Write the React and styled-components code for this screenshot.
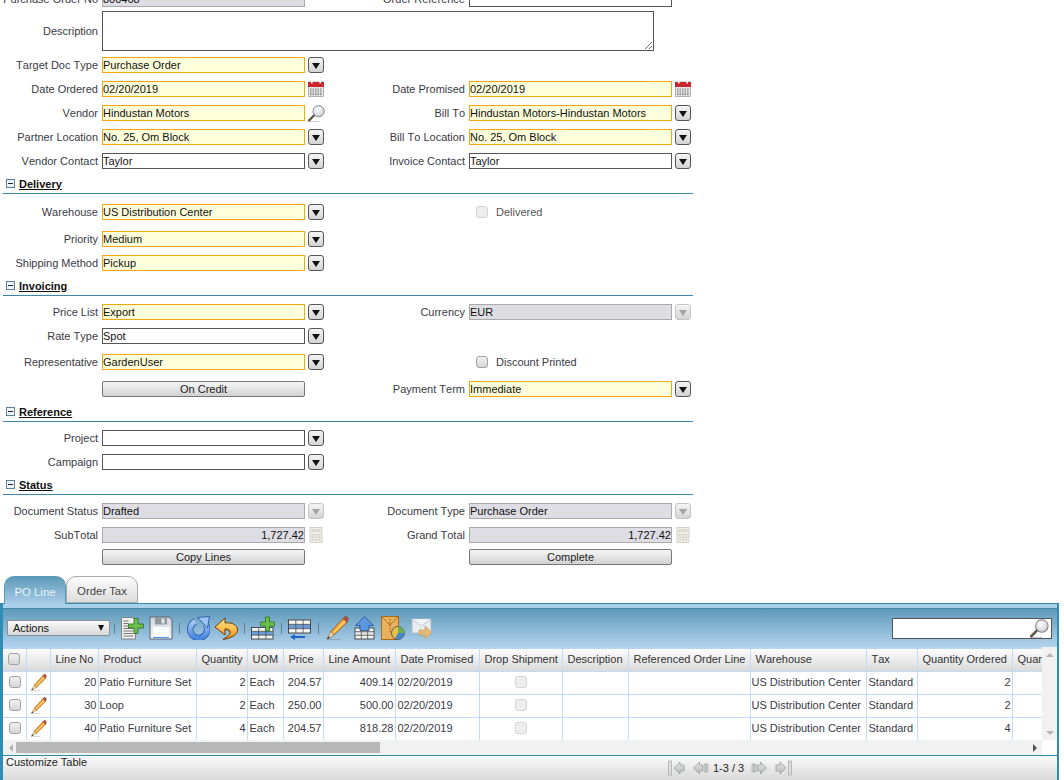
import styled, { createGlobalStyle } from 'styled-components';

const GlobalStyle = createGlobalStyle`
  html, body {
    margin: 0;
    padding: 0;
    height: 780px;
    overflow: hidden;
    background: #fff;
  }
  body {
    font-family: "Liberation Sans", Arial, sans-serif;
    font-size: 11px;
    color: #333;
  }
`;

const Page = styled.div`
  width: 1059px;
  margin-top: -13px;
`;

const Form = styled.div`
  width: 693px;
`;

const Row = styled.div`
  display: grid;
  grid-template-columns: 102px 203px 20px 144px 203px 21px;
  align-items: center;
  height: ${p => p.$h || 24}px;
  margin-top: ${p => p.$top || 0}px;
  margin-bottom: ${p => p.$bottom || 0}px;
`;

const Label = styled.label`
  padding-right: 4px;
  text-align: right;
  white-space: nowrap;
  font-kerning: none;
  color: #3a3a44;
`;

const kinds = {
  plain: 'background: #fff; border-color: #555;',
  mandatory: 'background: #ffffdc; border-color: #f0a90f;',
  disabled: 'background: #dedde3; border-color: #aaa;',
};

const TextInput = styled.input`
  box-sizing: border-box;
  width: 203px;
  height: 16px;
  padding: 0;
  border: 1px solid;
  outline: none;
  font: 11px "Liberation Sans", Arial, sans-serif;
  color: #111;
  text-align: ${p => (p.$right ? 'right' : 'left')};
  ${p => kinds[p.$kind || 'plain']}
`;

const DescArea = styled.textarea`
  box-sizing: border-box;
  grid-column: 2 / 6;
  width: 552px;
  height: 40px;
  margin: 0;
  padding: 0;
  border: 1px solid #555;
  outline: none;
`;

const IconCell = styled.div`
  display: flex;
  align-items: center;
  padding-left: 3px;
`;

const DropBtn = styled.span`
  box-sizing: border-box;
  display: flex;
  align-items: center;
  justify-content: center;
  width: 16px;
  height: 16px;
  border: 1px solid ${p => (p.$off ? '#c4c4c4' : '#555')};
  border-radius: 3px;
  background: linear-gradient(#f4f4f4, #d4d4d4);

  &::after {
    content: '';
    width: 0;
    height: 0;
    margin-top: 1px;
    border-left: 4px solid transparent;
    border-right: 4px solid transparent;
    border-top: 6px solid ${p => (p.$off ? '#a4a4a4' : '#111')};
  }
`;

const FormButton = styled.button`
  box-sizing: border-box;
  width: 203px;
  height: 16px;
  padding: 0;
  border: 1px solid #777;
  border-radius: 2px;
  background: linear-gradient(#f6f6f6, #d2d2d2);
  font: 11px "Liberation Sans", Arial, sans-serif;
  color: #222;
`;

const SectionHead = styled.div`
  display: flex;
  align-items: center;
  gap: 4px;
  box-sizing: border-box;
  height: 21px;
  margin-left: 3px;
  padding: 1px 0 0 3px;
  border-bottom: 1px solid #3f87aa;
`;

const MinusBox = styled.span`
  box-sizing: border-box;
  display: flex;
  align-items: center;
  justify-content: center;
  width: 9px;
  height: 9px;
  border: 1px solid #5d7f99;
  background: #eef3f7;

  &::after {
    content: '';
    width: 5px;
    height: 1px;
    background: #223;
  }
`;

const SectionTitle = styled.a`
  font-weight: bold;
  color: #111;
  text-decoration: underline;
`;

const CheckField = styled.div`
  display: flex;
  align-items: center;
  gap: 8px;
  padding-left: 7px;
  white-space: nowrap;
  color: ${p => (p.$off ? '#555' : '#3a3a44')};
`;

const Check = styled.input.attrs({ type: 'checkbox' })`
  appearance: none;
  box-sizing: border-box;
  display: block;
  width: 12px;
  height: 12px;
  margin: 0;
  border: 1px solid ${p => (p.disabled ? '#d4d4d4' : '#a2a2a2')};
  border-radius: 3px;
  background: ${p => (p.disabled ? '#eee' : 'linear-gradient(#f0f0f0, #d6d6d6)')};
`;

const Tabs = styled.div`
  display: flex;
  align-items: flex-end;
  height: 27px;
  margin-top: 9px;
  padding-left: 4px;
`;

const Tab = styled.div`
  box-sizing: border-box;
  display: flex;
  align-items: center;
  justify-content: center;
  width: ${p => p.$w}px;
  height: ${p => (p.$active ? 28 : 27)}px;
  padding-top: 2px;
  border-radius: 10px 10px 0 0;
  font-size: 11.4px;
  ${p => (p.$active
    ? 'background: linear-gradient(#5d9ab9, #a9cde8); color: #e9f3f8; border: 1px solid #5d9ab9; border-bottom: 0; margin-bottom: -1px; position: relative; z-index: 1;'
    : 'background: linear-gradient(#fdfdfd, #dcdcdc); color: #444; border: 1px solid #aaa;')}
`;

const Panel = styled.div`
  box-sizing: border-box;
  height: 177px;
  border: 2px solid #2f8cb2;
  border-width: 1px 2px 0 3px;
  display: flex;
  flex-direction: column;
`;

const TopStrip = styled.div`
  height: 4px;
  background: #a9cfe9;
  border-bottom: 1px solid #3f8bad;
`;

const Toolbar = styled.div`
  display: flex;
  align-items: center;
  box-sizing: border-box;
  height: 40px;
  padding: 0 0 2px 4px;
  background: linear-gradient(#5e9ab9, #b6d5f0);
`;

const ActionSelect = styled.div`
  box-sizing: border-box;
  display: flex;
  align-items: center;
  justify-content: space-between;
  width: 103px;
  height: 16px;
  margin-right: 4px;
  padding: 0 5px;
  border: 1px solid #8a8f94;
  border-radius: 2px;
  background: linear-gradient(#fafafa, #d8d8d8);
  color: #111;

  &::after {
    content: '';
    width: 0;
    height: 0;
    border-left: 3.5px solid transparent;
    border-right: 3.5px solid transparent;
    border-top: 6px solid #111;
  }
`;

const Sep = styled.span`
  width: 1px;
  height: 11px;
  margin-right: 6px;
  background: #66808f;
`;

const ToolIcon = styled.svg`
  display: block;
  width: 24px;
  height: 24px;
  flex: none;
  margin-right: ${p => p.$gap ?? 4}px;
`;

const PencilSlot = styled.span`
  flex: none;
  margin-right: 5px;
`;

const Search = styled.div`
  box-sizing: border-box;
  display: flex;
  align-items: center;
  justify-content: flex-end;
  width: 160px;
  height: 21px;
  margin-left: auto;
  margin-right: 5px;
  padding-right: 2px;
  border: 1px solid #555;
  background: #fff;
`;

const GridWrap = styled.div`
  display: flex;
  height: 91px;
`;

const TableClip = styled.div`
  width: 1039px;
  overflow: hidden;
`;

const Table = styled.table`
  table-layout: fixed;
  width: 1109px;
  border-collapse: collapse;
  font-size: 11px;
`;

const Th = styled.th`
  box-sizing: border-box;
  height: 22px;
  padding: 0 0 2px 5px;
  border-right: 1px solid #c2dbf6;
  border-bottom: 1px solid #c2dbf6;
  background: linear-gradient(#fdfdfd, #d9d9d9);
  font-weight: normal;
  font-kerning: none;
  text-align: left;
  white-space: nowrap;
  overflow: hidden;
  color: #333;
`;

const Td = styled.td`
  box-sizing: border-box;
  height: 23px;
  padding: 0 1px 1px ${p => p.$pad ?? 2}px;
  border-right: 1px solid #c2dbf6;
  border-bottom: 1px solid #c2dbf6;
  background: #fff;
  text-align: ${p => p.$align || 'left'};
  white-space: nowrap;
  overflow: hidden;
  color: #3a3a44;
`;

const Centered = styled.div`
  display: flex;
  justify-content: center;
`;

const VScroll = styled.div`
  width: 15px;
  margin-top: -2px;
  display: flex;
  flex-direction: column;
  justify-content: space-between;
  align-items: center;
  padding: 6px 0 5px;
  box-sizing: border-box;
  height: 93px;
  background: #f1f1f1;
`;

const Arrow = styled.span`
  width: 0;
  height: 0;
  ${p => ({
    up: 'border-left: 4px solid transparent; border-right: 4px solid transparent; border-bottom: 4px solid #b4b4b4;',
    down: 'border-left: 4px solid transparent; border-right: 4px solid transparent; border-top: 4px solid #b4b4b4;',
    left: 'border-top: 4px solid transparent; border-bottom: 4px solid transparent; border-right: 4px solid #b4b4b4;',
    right: 'border-top: 4px solid transparent; border-bottom: 4px solid transparent; border-left: 4px solid #555; margin-left: auto;',
  }[p.$dir])}
`;

const HScroll = styled.div`
  display: flex;
  align-items: center;
  width: 1039px;
  height: 15px;
  padding: 0 5px 0 6px;
  box-sizing: border-box;
  background: #f1f1f1;
`;

const Thumb = styled.div`
  width: 364px;
  height: 11px;
  margin-left: 3px;
  background: #b8b8b8;
`;

const Footer = styled.div`
  flex: 1;
  display: flex;
  border-top: 1px solid #2f8cb2;
  background: linear-gradient(#fbfbfb, #d8d8d8);
`;

const Customize = styled.div`
  width: 665px;
  padding-left: 3px;
  box-sizing: border-box;
  line-height: 13px;
  color: #222;
`;

const Pager = styled.div`
  display: flex;
  align-items: center;
  height: 24px;
  color: #222;
`;

const PagerIcon = styled.svg`
  display: block;
  width: 18px;
  height: 18px;
  margin-right: ${p => p.$gap}px;
`;

const PagerText = styled.span`
  margin-right: 6px;
`;

const SmallIcon = styled.svg`
  display: block;
  width: ${p => p.$w || 16}px;
  height: ${p => p.$w || 16}px;
`;

const CalendarIcon = () => (
  <SmallIcon viewBox="0 0 16 16">
    <rect x="0.5" y="1" width="15" height="14.5" fill="#e8e8e8" stroke="#888" strokeWidth="0.6" />
    <rect x="0" y="1" width="16" height="5" fill="#c8282c" />
    <rect x="3" y="0" width="1.5" height="2.5" fill="#fff" />
    <rect x="11.5" y="0" width="1.5" height="2.5" fill="#fff" />
    {[7.5, 9.5, 11.5, 13].map(y => [2, 4.5, 7, 9.5, 12].map(x => (
      <rect key={`${x}-${y}`} x={x} y={y} width="1.6" height="1.2" fill="#8a8a8a" />
    )))}
  </SmallIcon>
);

const MagnifierIcon = ({ w = 17 }) => (
  <SmallIcon $w={w} viewBox="0 0 17 17">
    <defs>
      <radialGradient id="lens" cx="0.4" cy="0.35" r="0.8">
        <stop offset="0" stopColor="#fff" />
        <stop offset="1" stopColor="#bfc3c7" />
      </radialGradient>
    </defs>
    <path d="M1 16.5h10" stroke="#ccc" strokeWidth="1" />
    <path d="M1 15.5L6.500 10" stroke="#5f5646" strokeWidth="2.400" strokeLinecap="round" />
    <circle cx="10.600" cy="6.200" r="5.600" fill="url(#lens)" stroke="#7b7f83" strokeWidth="0.9" />
  </SmallIcon>
);

const CalcIcon = () => (
  <SmallIcon viewBox="0 0 16 16">
    <rect x="2" y="0.5" width="12" height="15" fill="#eeeee6" stroke="#c8c8c0" strokeWidth="0.8" />
    <rect x="3.5" y="2" width="9" height="3" fill="#dcdcd2" />
    {[7, 9.5, 12].map(y => [3.5, 6.8, 10].map(x => (
      <rect key={`${x}-${y}`} x={x} y={y} width="2.3" height="1.5" fill="#cfcfc6" />
    )))}
  </SmallIcon>
);

const PencilIcon = ({ size = 24 }) => (
  <SmallIcon $w={size} viewBox="0 0 24 24">
    <path d="M2 23.5h13" stroke="#8d8d8d" strokeWidth="0.8" opacity="0.7" />
    <path d="M6 15.5L18 2.5 22 6.5 9 19z" fill="#f0a030" stroke="#8a4f10" strokeWidth="0.7" />
    <path d="M7.5 16.5L19.5 4 21 5.5 8.7 17.8z" fill="#ffcb6b" />
    <path d="M18 2.5l1.8-1.7c.7-.5 1.5-.4 2 .1l1 1c.5.6.5 1.4 0 2L22 6.5z" fill="#b5523e" stroke="#70352a" strokeWidth="0.5" />
    <path d="M6 15.5L9 19 2 23z" fill="#f2d9a8" stroke="#8a6a30" strokeWidth="0.6" />
    <path d="M3.6 20.6L4.8 22 2 23z" fill="#222" />
  </SmallIcon>
);

const TinyTable = ({ y = 12, h = 11, x = 2, w = 20, headFill = '#3f7fd0' }) => {
  const rows = [y + h / 3, y + (2 * h) / 3];
  const cols = [x + w / 3, x + (2 * w) / 3];
  return (
    <>
      <rect x={x} y={y} width={w} height={h} fill="#f4f4f0" stroke="#3c3c3c" strokeWidth="0.9" />
      <rect x={x + 0.5} y={y + h / 3} width={w - 1} height={h / 3} fill={headFill} opacity="0.75" />
      {rows.map(r => <path key={r} d={`M${x} ${r}h${w}`} stroke="#444" strokeWidth="0.7" />)}
      {cols.map(c => <path key={c} d={`M${c} ${y}v${h}`} stroke="#444" strokeWidth="0.7" />)}
    </>
  );
};

const GreenPlus = ({ cx, cy, s = 5 }) => (
  <path
    d={`M${cx - 2} ${cy - s}h4v${s - 2}h${s - 2}v4h-${s - 2}v${s - 2}h-4v-${s - 2}h-${s - 2}v-4h${s - 2}z`}
    fill="#6cc04a"
    stroke="#2f6e22"
    strokeWidth="0.8"
  />
);

const NewIcon = () => (
  <ToolIcon viewBox="0 0 24 24" $gap={4}>
    <path d="M0.500 1.500h11l3 3V23H0.500z" fill="#f0f0ec" stroke="#6d6d6d" strokeWidth="0.8" />
    {[5, 7.5, 10, 12.5, 15, 17.5, 20].map(y => (
      <path key={y} d={`M2.500 ${y}h${y < 12 ? 5 : 10}`} stroke="#777" strokeWidth="1" />
    ))}
    <GreenPlus cx={15} cy={10} s={7.500} />
  </ToolIcon>
);

const SaveIcon = () => (
  <ToolIcon viewBox="0 0 24 24" $gap={6}>
    <defs>
      <linearGradient id="disk" x1="0" y1="0" x2="0" y2="1">
        <stop offset="0" stopColor="#cfd5dc" />
        <stop offset="1" stopColor="#f4f6f8" />
      </linearGradient>
    </defs>
    <path d="M1 1h19l3 3v19H1z" fill="url(#disk)" stroke="#59636d" strokeWidth="1" />
    <rect x="6" y="1.5" width="12" height="7" fill="#8f97a0" />
    <rect x="12.5" y="2.5" width="3" height="5" fill="#e6e8ea" />
    <rect x="4" y="11" width="16" height="11" fill="#fbfcfd" />
    <path d="M4 21.5h16" stroke="#5a9ae0" strokeWidth="1.2" />
  </ToolIcon>
);

const RefreshIcon = () => (
  <ToolIcon viewBox="0 0 24 24" $gap={4}>
    <defs>
      <linearGradient id="ring" x1="0" y1="0" x2="0" y2="1">
        <stop offset="0" stopColor="#a6cbf6" />
        <stop offset="1" stopColor="#4a86e0" />
      </linearGradient>
    </defs>
    <path d="M9.500 5.500A8.500 8.500 0 1 0 19.600 8.500" fill="none" stroke="#2a55a8" strokeWidth="6.400" />
    <path d="M9.500 5.500A8.500 8.500 0 1 0 19.600 8.500" fill="none" stroke="url(#ring)" strokeWidth="4.800" />
    <path d="M11.500 1.500L23.500 0.500 21.500 12z" fill="#9cc4f2" stroke="#2a55a8" strokeWidth="0.9" />
  </ToolIcon>
);

const UndoIcon = () => (
  <ToolIcon viewBox="0 0 24 24" $gap={6}>
    <defs>
      <linearGradient id="undo" x1="0" y1="0" x2="0" y2="1">
        <stop offset="0" stopColor="#ffe88a" />
        <stop offset="1" stopColor="#f09010" />
      </linearGradient>
    </defs>
    <path
      d="M1 11L11 2v5c7-1 12.500 2 12.500 7 0 5-6.500 8-14.500 9.500L11 22c3-2 6-4 5-6-1-2-3-3-5-3v6z"
      fill="url(#undo)"
      stroke="#6b3a08"
      strokeWidth="1"
    />
    <path d="M11 13c2 0 4 1 5 3" fill="none" stroke="#8a4a08" strokeWidth="1.200" />
  </ToolIcon>
);

const AddRowIcon = () => (
  <ToolIcon viewBox="0 0 24 24" $gap={6}>
    <TinyTable x={0.500} y={11.500} w={21.500} h={11.500} />
    <GreenPlus cx={16.500} cy={8} s={7} />
  </ToolIcon>
);

const DelRowIcon = () => (
  <ToolIcon viewBox="0 0 24 24" $gap={6}>
    <TinyTable x={0.500} y={4} w={22} h={13} />
    <path d="M2 21l5-3v2h10v2H7v2z" fill="#1f63c8" />
    <path d="M18 21h4" stroke="#9bb8d8" strokeWidth="1.500" />
  </ToolIcon>
);

const ExportIcon = () => (
  <ToolIcon viewBox="0 0 24 24" $gap={3}>
    <TinyTable x={1} y={12} w={19} h={11} headFill="#ddd" />
    <path d="M10.500 0.500l9 9h-4.500v5H6v-5H1.500z" fill="#5d97de" stroke="#1f4f93" strokeWidth="0.8" />
  </ToolIcon>
);

const ZoomDocIcon = () => (
  <ToolIcon viewBox="0 0 24 24" $gap={6}>
    <rect x="0.500" y="0.500" width="17" height="23" fill="#e9b25a" stroke="#a86d1c" />
    <path d="M1 1l8 8 8-8" fill="none" stroke="#a86d1c" strokeWidth="0.9" />
    <path d="M9 3v14" stroke="#8f3a1a" strokeWidth="0.8" strokeDasharray="1.500 1.500" />
    <circle cx="17" cy="17" r="6.500" fill="#e7c04a" stroke="#333" strokeWidth="0.7" />
    <path d="M17 17V10.500A6.500 6.500 0 0 1 23.500 17z" fill="#6fae58" />
    <path d="M17 17h6.500A6.500 6.500 0 0 1 14 22.800z" fill="#4a85c8" />
  </ToolIcon>
);

const MailIcon = () => (
  <ToolIcon viewBox="0 0 24 24" $gap={0} opacity="0.88">
    <path d="M1 3h19v14H1z" fill="#f4f4f4" stroke="#b8bcc0" strokeWidth="0.9" />
    <path d="M1 3l9.500 7L20 3" fill="#fff" stroke="#c2c6ca" strokeWidth="0.9" />
    <path d="M8 14h6v-4l7 6.500-7 6.500v-4H8z" fill="#eeb968" stroke="#c9923e" strokeWidth="0.6" />
  </ToolIcon>
);

// grey, disabled pager buttons: arrow plus end bar(s)
const pagerShapes = {
  first: { arrow: 'M6 9l6-6v3h4v6h-4v3z', bars: [[0.5, 2, 3, 14]] },
  prev: { arrow: 'M0.500 9l6-6v3h3v6h-3v3z', bars: [[11, 5, 1.500, 8], [13.500, 5, 1.500, 8]] },
  next: { arrow: 'M16.500 9l-6-6v3h-3v6h3v3z', bars: [[2, 5, 1.500, 8], [4.500, 5, 1.500, 8]] },
  last: { arrow: 'M12 9L6 3v3H2v6h4v3z', bars: [[14.500, 2, 3, 14]] },
};

const ArrowBtn = ({ kind, gap }) => {
  const { arrow, bars } = pagerShapes[kind];
  return (
    <PagerIcon viewBox="0 0 18 18" $gap={gap}>
      <defs>
        <linearGradient id={`pg-${kind}`} x1="0" y1="0" x2="0" y2="1">
          <stop offset="0" stopColor="#e6e8e6" />
          <stop offset="1" stopColor="#b4b8b4" />
        </linearGradient>
      </defs>
      <path d={arrow} fill={`url(#pg-${kind})`} stroke="#9aa09c" strokeWidth="0.8" />
      {bars.map(([x, y, w, h]) => (
        <rect key={x} x={x} y={y} width={w} height={h} fill="#dcdedc" stroke="#9aa09c" strokeWidth="0.6" />
      ))}
    </PagerIcon>
  );
};

const Field = ({ label, value, kind, right, children }) => (
  <>
    <Label>{label}</Label>
    <TextInput readOnly value={value} $kind={kind} $right={right} />
    <IconCell>{children}</IconCell>
  </>
);

const Section = ({ title }) => (
  <SectionHead>
    <MinusBox />
    <SectionTitle>{title}</SectionTitle>
  </SectionHead>
);

const columns = [
  ['', 23], ['', 24], ['Line No', 48], ['Product', 98], ['Quantity', 51], ['UOM', 36], ['Price', 40],
  ['Line Amount', 72], ['Date Promised', 84], ['Drop Shipment', 83], ['Description', 66],
  ['Referenced Order Line', 122], ['Warehouse', 116], ['Tax', 51], ['Quantity Ordered', 95], ['Quantity Invoiced', 100],
];

const lines = [
  { no: 20, product: 'Patio Furniture Set', qty: 2, price: '204.57', amount: '409.14' },
  { no: 30, product: 'Loop', qty: 2, price: '250.00', amount: '500.00' },
  { no: 40, product: 'Patio Furniture Set', qty: 4, price: '204.57', amount: '818.28' },
];

const App = () => (
  <Page>
    <GlobalStyle />
    <Form>
      <Row>
        <Field label="Purchase Order No" value="800468" kind="disabled" />
        <Label>Order Reference</Label>
        <TextInput readOnly value="" />
      </Row>
      <Row $h={40} $bottom={2}>
        <Label>Description</Label>
        <DescArea readOnly />
      </Row>
      <Row>
        <Field label="Target Doc Type" value="Purchase Order" kind="mandatory"><DropBtn /></Field>
      </Row>
      <Row>
        <Field label="Date Ordered" value="02/20/2019" kind="mandatory"><CalendarIcon /></Field>
        <Field label="Date Promised" value="02/20/2019" kind="mandatory"><CalendarIcon /></Field>
      </Row>
      <Row>
        <Field label="Vendor" value="Hindustan Motors" kind="mandatory"><MagnifierIcon /></Field>
        <Field label="Bill To" value="Hindustan Motors-Hindustan Motors" kind="mandatory"><DropBtn /></Field>
      </Row>
      <Row>
        <Field label="Partner Location" value="No. 25, Om Block" kind="mandatory"><DropBtn /></Field>
        <Field label="Bill To Location" value="No. 25, Om Block" kind="mandatory"><DropBtn /></Field>
      </Row>
      <Row>
        <Field label="Vendor Contact" value="Taylor"><DropBtn /></Field>
        <Field label="Invoice Contact" value="Taylor"><DropBtn /></Field>
      </Row>

      <Section title="Delivery" />
      <Row $top={6}>
        <Field label="Warehouse" value="US Distribution Center" kind="mandatory"><DropBtn /></Field>
        <span />
        <CheckField $off><Check disabled />Delivered</CheckField>
      </Row>
      <Row $top={3}>
        <Field label="Priority" value="Medium" kind="mandatory"><DropBtn /></Field>
      </Row>
      <Row>
        <Field label="Shipping Method" value="Pickup" kind="mandatory"><DropBtn /></Field>
      </Row>

      <Section title="Invoicing" />
      <Row $top={4}>
        <Field label="Price List" value="Export" kind="mandatory"><DropBtn /></Field>
        <Field label="Currency" value="EUR" kind="disabled"><DropBtn $off /></Field>
      </Row>
      <Row>
        <Field label="Rate Type" value="Spot"><DropBtn /></Field>
      </Row>
      <Row $top={2}>
        <Field label="Representative" value="GardenUser" kind="mandatory"><DropBtn /></Field>
        <span />
        <CheckField><Check />Discount Printed</CheckField>
      </Row>
      <Row $top={3}>
        <span />
        <FormButton>On Credit</FormButton>
        <span />
        <Field label="Payment Term" value="Immediate" kind="mandatory"><DropBtn /></Field>
      </Row>

      <Section title="Reference" />
      <Row $top={4}>
        <Field label="Project" value=""><DropBtn /></Field>
      </Row>
      <Row>
        <Field label="Campaign" value=""><DropBtn /></Field>
      </Row>

      <Section title="Status" />
      <Row $top={4}>
        <Field label="Document Status" value="Drafted" kind="disabled"><DropBtn $off /></Field>
        <Field label="Document Type" value="Purchase Order" kind="disabled"><DropBtn $off /></Field>
      </Row>
      <Row>
        <Field label="SubTotal" value="1,727.42" kind="disabled" right><CalcIcon /></Field>
        <Field label="Grand Total" value="1,727.42" kind="disabled" right><CalcIcon /></Field>
      </Row>
      <Row $h={20}>
        <span />
        <FormButton>Copy Lines</FormButton>
        <span />
        <span />
        <FormButton>Complete</FormButton>
      </Row>
    </Form>

    <Tabs>
      <Tab $active $w={62}>PO Line</Tab>
      <Tab $w={72}>Order Tax</Tab>
    </Tabs>

    <Panel>
      <TopStrip />
      <Toolbar>
        <ActionSelect>Actions</ActionSelect>
        <Sep />
        <NewIcon />
        <SaveIcon />
        <Sep />
        <RefreshIcon />
        <UndoIcon />
        <Sep />
        <AddRowIcon />
        <Sep />
        <DelRowIcon />
        <Sep />
        <PencilSlot><PencilIcon /></PencilSlot>
        <ExportIcon />
        <ZoomDocIcon />
        <MailIcon />
        <Search><MagnifierIcon w={19} /></Search>
      </Toolbar>

      <GridWrap>
        <div>
          <TableClip>
            <Table>
              <colgroup>
                {columns.map(([name, width], i) => <col key={i} width={width} />)}
              </colgroup>
              <thead>
                <tr>
                  {columns.map(([name], i) => (
                    <Th key={i}>{i === 0 ? <Check /> : name}</Th>
                  ))}
                </tr>
              </thead>
              <tbody>
                {lines.map(line => (
                  <tr key={line.no}>
                    <Td><Centered><Check /></Centered></Td>
                    <Td><Centered><PencilIcon size={17} /></Centered></Td>
                    <Td $align="right">{line.no}</Td>
                    <Td $pad={1}>{line.product}</Td>
                    <Td $align="right">{line.qty}</Td>
                    <Td>Each</Td>
                    <Td $align="right">{line.price}</Td>
                    <Td $align="right">{line.amount}</Td>
                    <Td>02/20/2019</Td>
                    <Td><Centered><Check disabled /></Centered></Td>
                    <Td />
                    <Td />
                    <Td $pad={1}>US Distribution Center</Td>
                    <Td>Standard</Td>
                    <Td $align="right">{line.qty}</Td>
                    <Td />
                  </tr>
                ))}
              </tbody>
            </Table>
          </TableClip>
        </div>
        <VScroll>
          <Arrow $dir="up" />
          <Arrow $dir="down" />
        </VScroll>
      </GridWrap>
      <HScroll>
        <Arrow $dir="left" />
        <Thumb />
        <Arrow $dir="right" />
      </HScroll>
      <Footer>
        <Customize>Customize Table</Customize>
        <Pager>
          <ArrowBtn kind="first" gap={7} />
          <ArrowBtn kind="prev" gap={2} />
          <PagerText>1-3 / 3</PagerText>
          <ArrowBtn kind="next" gap={6} />
          <ArrowBtn kind="last" gap={0} />
        </Pager>
      </Footer>
    </Panel>
  </Page>
);

export default App;
